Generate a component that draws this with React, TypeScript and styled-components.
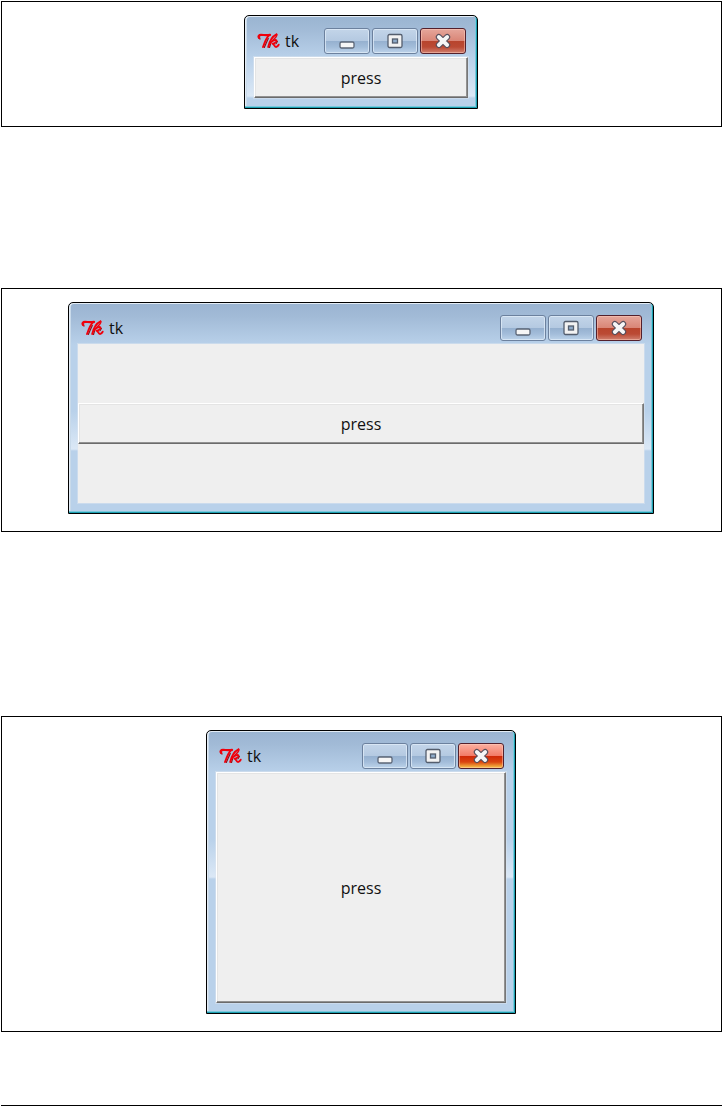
import React from "react";
import styled, { createGlobalStyle } from "styled-components";

const GlobalStyle = createGlobalStyle`
  * { box-sizing: border-box; }
  body { margin: 0; background: #fff; }
`;

const Page = styled.main`
  display: flex;
  flex-direction: column;
  padding: 1px 0 0 1px;
  font-family: "Open Sans", "Noto Sans", sans-serif;
  font-size: 16px;
  line-height: 24px;
  color: #111;
`;

const Figure = styled.figure<{ $gap: number }>`
  margin: 0 0 ${(p) => p.$gap}px;
  padding: 13px 17px 17px 16px;
  border: 1px solid #000;
  display: flex;
  justify-content: center;
`;

const Rule = styled.hr`
  width: 100%;
  margin: 0;
  border: 0;
  border-top: 1px solid #000;
`;

const Window = styled.section<{ $width: number; $glow: number }>`
  width: 100%;
  max-width: ${(p) => p.$width}px;
  border: 1px solid #000;
  border-radius: 5px 5px 0 0;
  padding: 0 9px 10px;
  display: flex;
  flex-direction: column;
  background: linear-gradient(
    #9ab4d1 0,
    #a2bbd7 14px,
    #b9d1ea 42px,
    #b9d1ea ${(p) => p.$glow - 38}px,
    #dbe8f6 ${(p) => p.$glow}px,
    #b9d1ea ${(p) => p.$glow + 2}px
  );
  box-shadow: inset -1px -1px 0 #1c9fb0, inset -2px -2px 0 #7cc8dc,
    inset 1px 1px 0 #e3ecf5, inset 2px 0 0 #c9daea;
`;

const TitleBar = styled.header`
  display: flex;
  justify-content: space-between;
  height: 41px;
  padding: 12px 2px 0 3px;
`;

const Title = styled.div`
  display: flex;
  align-items: center;
  gap: 5px;
  height: 26px;
`;

const Name = styled.span``;

const Controls = styled.div`
  display: flex;
  gap: 2px;
`;

type Tone = "plain" | "close" | "hot";

const fills: Record<Tone, string> = {
  plain: "linear-gradient(#c3d5e9 0, #b4c9e1 50%, #95b0cf 50%, #a3bdda 75%, #bdd3ea 100%)",
  close: "linear-gradient(#e5a69b 0, #d98576 50%, #b8442d 50%, #bb4a34 75%, #d08070 100%)",
  hot: "linear-gradient(#fbb0a0 0, #f27a66 50%, #cf2708 50%, #da4410 75%, #f8c948 100%)",
};

const CaptionButton = styled.button<{ $tone: Tone }>`
  width: 46px;
  height: 26px;
  padding: 0;
  display: grid;
  place-items: center;
  border: 1px solid ${(p) => (p.$tone === "plain" ? "#6c819e" : "#53202c")};
  border-radius: 3px;
  background: ${(p) => fills[p.$tone]};
  box-shadow: inset 0 0 0 1px
    ${(p) => (p.$tone === "plain" ? "rgba(224,236,248,.75)" : "rgba(255,205,190,.5)")};
`;

const Client = styled.div<{ $height: number }>`
  min-height: ${(p) => p.$height}px;
  display: flex;
  align-items: center;
  background: #efefef;
  box-shadow: 0 0 0 1px rgba(222, 230, 240, 0.5);
`;

const PressButton = styled.button<{ $fill?: boolean }>`
  width: 100%;
  height: 41px;
  ${(p) => p.$fill && "height: auto; align-self: stretch;"}
  padding: 0;
  font: inherit;
  color: inherit;
  background: #efefef;
  border: 1px solid;
  border-color: #fff #777 #6b6b6b #fff;
  box-shadow: inset -1px -1px 0 #929292, inset 1px 1px 0 #e4e4e4;
`;

const TkLogo = () => (
  <svg width="23" height="16" viewBox="0 0 23 16" aria-hidden="true" fill="none" strokeLinecap="round" strokeLinejoin="round">
    <path d="M3 6C1 5 1 3 3.500 2.500M7.300 14.500l1.500-3.500 2.500-5.500M12.500 14.500l1-3.500" stroke="#8f1018" strokeWidth="1.200" />
    <path d="M2.300 5C.7 3.500 2 1.900 4 1.900c3 0 5.500.5 9-.1" stroke="#f0000c" strokeWidth="2.200" />
    <path d="M12 2.300C9.500 4.500 8 8.500 6 14" stroke="#f0000c" strokeWidth="1.900" />
    <path d="M19.500 1.300C16 3 12.500 8 11.200 14" stroke="#f0000c" strokeWidth="1.900" />
    <path d="M19.500 1.300c1.500 1-1.500 4-4.500 6.700" stroke="#f0000c" strokeWidth="1.400" />
    <path d="M13 10.500c2-2.700 5.500-4.300 6.500-3 .6 1.500-1.800 3-4 3.200 2 .2 1.500 3.300 3.500 3.300 1.300-.1 2-1 2.700-2.300" stroke="#f0000c" strokeWidth="1.900" />
    <path d="M20.500 8.500l-1.500 2.500" stroke="#8f1018" strokeWidth="1" />
  </svg>
);

const MinimizeGlyph = () => (
  <svg width="16" height="16" viewBox="0 0 16 16" aria-hidden="true">
    <rect x="1" y="9" width="14" height="6" rx="1.500" fill="#f6f6f6" stroke="#5b6576" strokeWidth="1.300" />
  </svg>
);

const MaximizeGlyph = () => (
  <svg width="16" height="16" viewBox="0 0 16 16" aria-hidden="true">
    <rect x="1" y="1.500" width="14" height="13" rx="1.500" fill="#f2f2f2" stroke="#535d6d" strokeWidth="1.300" />
    <rect x="5.500" y="6" width="5" height="4" fill="#8fabc9" stroke="#535d6d" strokeWidth="1.300" />
  </svg>
);

const CloseGlyph = () => (
  <svg width="16" height="16" viewBox="0 0 16 16" aria-hidden="true" strokeLinecap="round">
    <path d="M3.800 4l8.400 8M12.200 4l-8.400 8" stroke="#564f5c" strokeWidth="6" />
    <path d="M3.800 4l8.400 8M12.200 4l-8.400 8" stroke="#f6f6f6" strokeWidth="3.800" />
  </svg>
);

interface TkWindowProps {
  width: number;
  height: number;
  glow: number;
  fill?: boolean;
  hot?: boolean;
}

const TkWindow = ({ width, height, glow, fill, hot }: TkWindowProps) => (
  <Window $width={width} $glow={glow}>
    <TitleBar>
      <Title>
        <TkLogo />
        <Name>tk</Name>
      </Title>
      <Controls>
        <CaptionButton $tone="plain" aria-label="Minimize"><MinimizeGlyph /></CaptionButton>
        <CaptionButton $tone="plain" aria-label="Maximize"><MaximizeGlyph /></CaptionButton>
        <CaptionButton $tone={hot ? "hot" : "close"} aria-label="Close"><CloseGlyph /></CaptionButton>
      </Controls>
    </TitleBar>
    <Client $height={height}>
      <PressButton $fill={fill}>press</PressButton>
    </Client>
  </Window>
);

export default function App() {
  return (
    <>
      <GlobalStyle />
      <Page>
        <Figure $gap={161}>
          <TkWindow width={234} height={41} glow={80} />
        </Figure>
        <Figure $gap={184}>
          <TkWindow width={586} height={159} glow={146} />
        </Figure>
        <Figure $gap={73}>
          <TkWindow width={310} height={231} glow={146} fill hot />
        </Figure>
        <Rule />
      </Page>
    </>
  );
}
